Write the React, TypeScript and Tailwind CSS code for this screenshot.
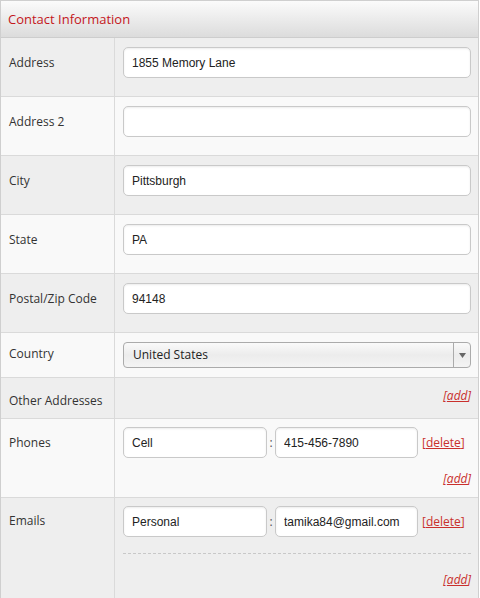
import React from "react";

const label = "font-['Open_Sans',sans-serif] text-[12px] text-[#333]";
const inputCls =
  "h-[31px] bg-white border border-[#c9c9c9] rounded-[5px] shadow-[inset_0_1px_2px_rgba(0,0,0,0.08)] px-[8px] text-[12px] text-[#222] font-['Liberation_Sans',Arial,sans-serif] outline-none";

function Row({
  name,
  bg,
  labelPt,
  children,
  h,
  last,
}: {
  name: string;
  bg: string;
  labelPt: string;
  children: React.ReactNode;
  h: string;
  last?: boolean;
}) {
  return (
    <div className={`flex ${h} ${bg} ${last ? "" : "border-b border-[#dadada]"}`}>
      <div className={`w-[114px] shrink-0 border-r border-[#dadada] pl-[8px] ${labelPt} ${label}`}>{name}</div>
      <div className="flex-1 min-w-0 pl-[8px] pr-[7px]">{children}</div>
    </div>
  );
}

function Add() {
  return (
    <div className="text-right font-['Open_Sans',sans-serif] text-[12px] italic text-[#c9302c]">
      [<span className="underline">add</span>]
    </div>
  );
}

function Pair({ a, b }: { a: string; b: string }) {
  return (
    <div className="flex items-center">
      <input className={`${inputCls} w-[144px]`} defaultValue={a} readOnly />
      <span className="w-[8px] text-center text-[12px] text-[#555] font-['Open_Sans',sans-serif]">:</span>
      <input className={`${inputCls} w-[143px]`} defaultValue={b} readOnly />
      <span className="ml-[4px] font-['Open_Sans',sans-serif] text-[12px] text-[#c9302c]">
        [<span className="underline">delete</span>]
      </span>
    </div>
  );
}

export default function App() {
  const gray = "bg-[#eeeeee]";
  const light = "bg-[#f9f9f9]";
  return (
    <div className="w-[480px] h-[598px] overflow-hidden bg-white">
      <div className="border-l border-r border-t border-[#cfcfcf] w-[479px]">
        <div className="h-[37px] border-b border-[#cdcdcd] bg-gradient-to-b from-[#fbfbfb] to-[#dcdcdc] pl-[7px] flex items-center">
          <span className="font-['Open_Sans',sans-serif] text-[13px] text-[#c4161c] leading-none">Contact Information</span>
        </div>
        <Row name="Address" bg={gray} labelPt="pt-[16px]" h="h-[59px]">
          <div className="pt-[9px]">
            <input className={`${inputCls} w-full`} defaultValue="1855 Memory Lane" readOnly />
          </div>
        </Row>
        <Row name="Address 2" bg={light} labelPt="pt-[16px]" h="h-[59px]">
          <div className="pt-[9px]">
            <input className={`${inputCls} w-full`} defaultValue="" readOnly />
          </div>
        </Row>
        <Row name="City" bg={gray} labelPt="pt-[16px]" h="h-[59px]">
          <div className="pt-[9px]">
            <input className={`${inputCls} w-full`} defaultValue="Pittsburgh" readOnly />
          </div>
        </Row>
        <Row name="State" bg={light} labelPt="pt-[16px]" h="h-[59px]">
          <div className="pt-[9px]">
            <input className={`${inputCls} w-full`} defaultValue="PA" readOnly />
          </div>
        </Row>
        <Row name="Postal/Zip Code" bg={gray} labelPt="pt-[16px]" h="h-[59px]">
          <div className="pt-[9px]">
            <input className={`${inputCls} w-full`} defaultValue="94148" readOnly />
          </div>
        </Row>
        <Row name="Country" bg={light} labelPt="pt-[12px]" h="h-[45px]">
          <div className="pt-[9px]">
            <div className="h-[26px] flex border border-[#ababab] rounded-[4px] bg-gradient-to-b from-[#fafafa] via-[#ececec] to-[#f4f4f4] overflow-hidden">
              <div className="flex-1 pl-[9px] flex items-center font-['Open_Sans',sans-serif] text-[12px] text-[#222]">United States</div>
              <div className="w-[17px] border-l border-[#ababab] flex items-center justify-center">
                <svg width="7" height="5" viewBox="0 0 7 5"><path d="M0 0h7L3.5 5z" fill="#666" /></svg>
              </div>
            </div>
          </div>
        </Row>
        <Row name="Other Addresses" bg={gray} labelPt="pt-[14px]" h="h-[41px]">
          <div className="pt-[9px]">
            <Add />
          </div>
        </Row>
        <Row name="Phones" bg={light} labelPt="pt-[15px]" h="h-[79px]">
          <div className="pt-[8px]">
            <Pair a="Cell" b="415-456-7890" />
            <div className="pt-[12px]">
              <Add />
            </div>
          </div>
        </Row>
        <Row name="Emails" bg={gray} labelPt="pt-[14px]" h="h-[102px]" last>
          <div className="pt-[8px]">
            <div className="pb-[16px] border-b border-dashed border-[#c8c8c8]">
              <Pair a="Personal" b="tamika84@gmail.com" />
            </div>
            <div className="pt-[17px]">
              <Add />
            </div>
          </div>
        </Row>
      </div>
    </div>
  );
}
